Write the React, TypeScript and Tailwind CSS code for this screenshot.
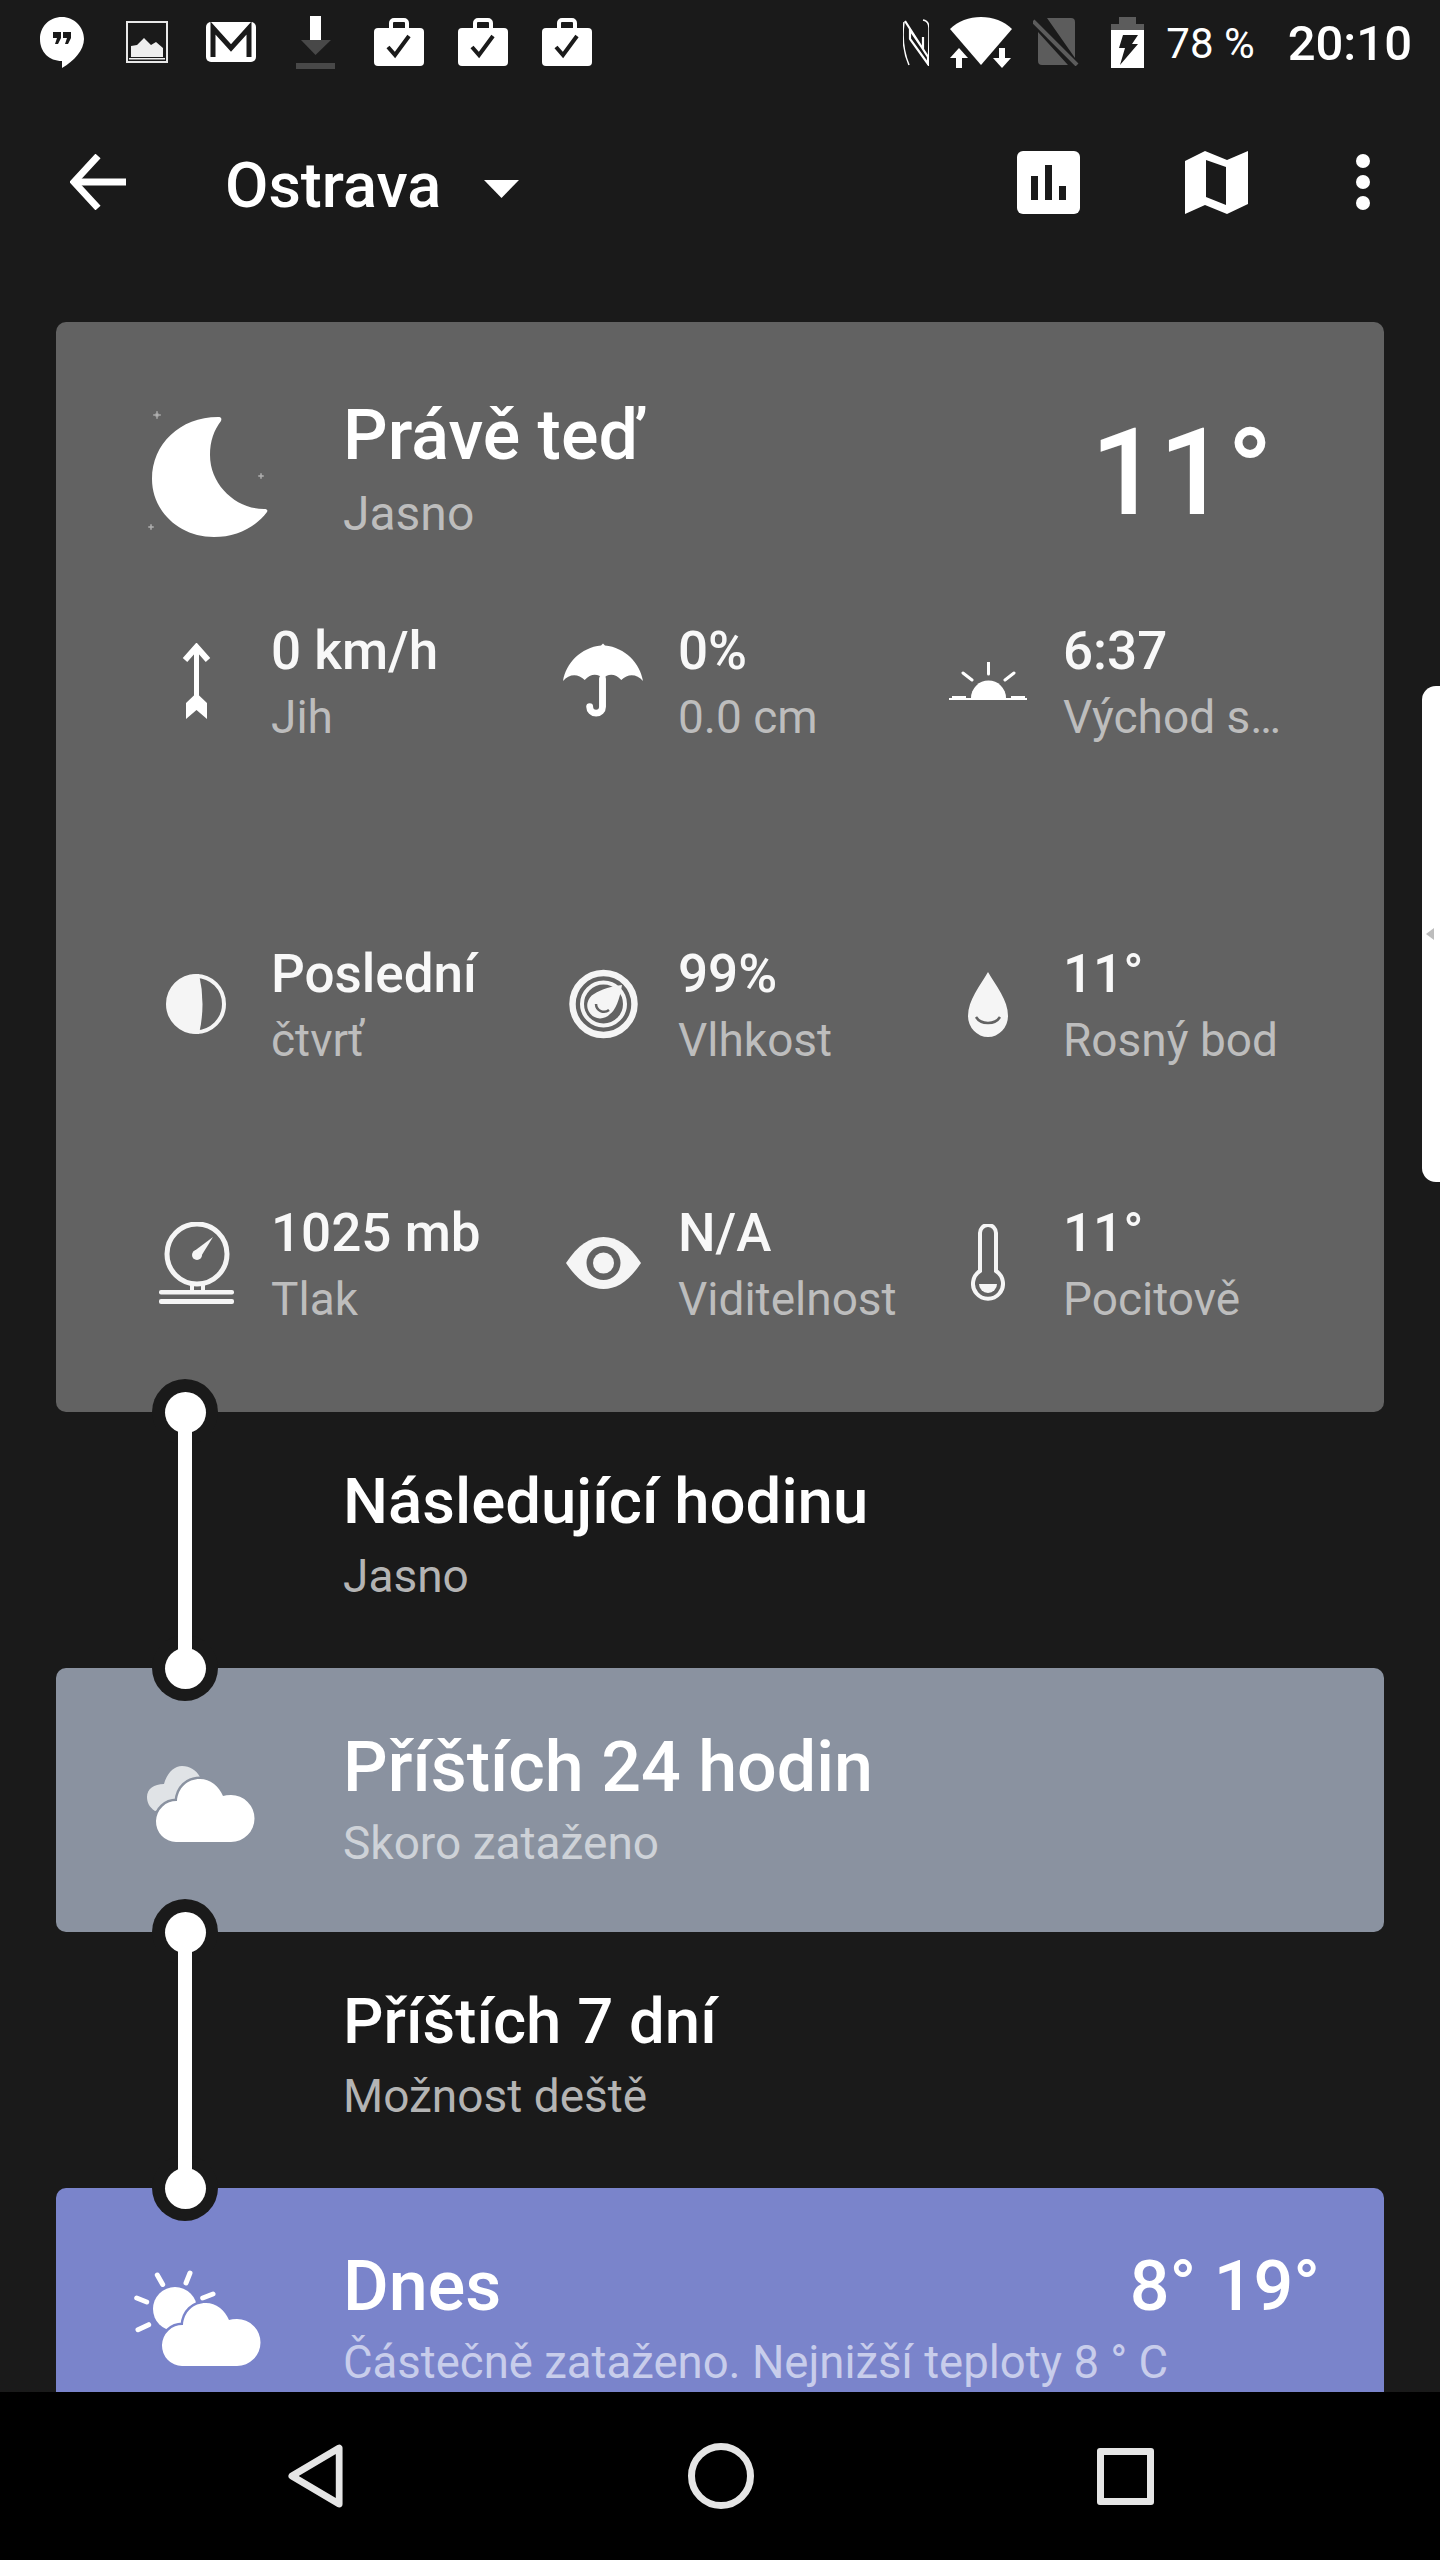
import React from "react";

const CARD = "#626262";
const BG = "#1a1a1a";

function Hangouts() {
  return (
    <svg width="44" height="51" viewBox="0 0 44 51">
      <path d="M22 0C9 0 0 10 0 22c0 13 9 22 22 22v7c12-7 22-18 22-29C44 10 34 0 22 0z" fill="#fff" />
      <path d="M13 15h8v6l-3 6h-3l2-6h-4zM23 15h8v6l-3 6h-3l2-6h-4z" fill={BG} />
    </svg>
  );
}

function Picture() {
  return (
    <svg width="42" height="42" viewBox="0 0 42 42">
      <rect x="1" y="1" width="40" height="40" fill="none" stroke="#e8e8e8" strokeWidth="2" />
      <path d="M5 36V25l6-1 7-7 7 7 5-3 7 6v9z" fill="#eee" />
      <rect x="3" y="37" width="36" height="1.5" fill="#eee" />
    </svg>
  );
}

function Gmail() {
  return (
    <svg width="50" height="40" viewBox="0 0 50 40">
      <rect width="50" height="40" rx="5" fill="#fff" />
      <path d="M7 35V6l18 20L43 6v29" fill="none" stroke={BG} strokeWidth="5" />
    </svg>
  );
}

function Download() {
  return (
    <svg width="39" height="53" viewBox="0 0 39 53">
      <rect x="14" width="11" height="24" fill="#fff" />
      <path d="M5 24h30L19.500 39z" fill="#484848" />
      <rect y="47" width="39" height="6" fill="#484848" />
    </svg>
  );
}

function Bag() {
  return (
    <svg width="50" height="48" viewBox="0 0 50 48">
      <path d="M17 10V5a3 3 0 0 1 3-3h10a3 3 0 0 1 3 3v5" fill="none" stroke="#fff" strokeWidth="4" />
      <rect y="10" width="50" height="38" rx="4" fill="#fff" />
      <path d="M14 29l7 8 14-19" fill="none" stroke={BG} strokeWidth="4" />
    </svg>
  );
}

function Nfc() {
  return (
    <svg width="26" height="47" viewBox="0 0 26 47" fill="none" stroke="#fff">
      <path d="M1 3C-1 18 0 32 6 46" strokeWidth="1.500" />
      <path d="M20 1c5 1 6 4 6 8 0 12 0 24-1 37" strokeWidth="1.500" />
      <path d="M2 2L25 38v7L7 20v-9l13 19V18" strokeWidth="2.200" />
    </svg>
  );
}

function WifiData() {
  return (
    <svg width="62" height="51" viewBox="0 0 62 51">
      <path d="M0 12C8 4 19 0 31 0s23 4 31 12L31 48z" fill="#fff" />
      <rect x="6" y="40" width="6" height="11" fill="#fff" />
      <path d="M0 41L9 31l9 10z" fill="#fff" />
      <rect x="49" y="31" width="6" height="11" fill="#fff" />
      <path d="M43 41h18l-9 10z" fill="#fff" />
    </svg>
  );
}

function NoSim() {
  return (
    <svg width="46" height="48" viewBox="0 0 46 48">
      <path d="M14 0h24a4 4 0 0 1 4 4v36zM5 14l30 33H9a4 4 0 0 1-4-4z" fill="#5c5c5c" />
      <path d="M0 3l44 44" stroke="#5c5c5c" strokeWidth="4" />
    </svg>
  );
}

function Battery() {
  return (
    <svg width="33" height="51" viewBox="0 0 33 51">
      <path d="M8 0h17v7h8v44H0V7h8z" fill="#5c5c5c" />
      <rect y="13" width="33" height="38" fill="#fff" />
      <path d="M12 18h15l-6 9h6L9 48l5-17H8z" fill={BG} />
    </svg>
  );
}

function BackArrow() {
  return (
    <svg width="56" height="56" viewBox="0 0 56 56" fill="none" stroke="#fff" strokeWidth="7">
      <path d="M28 2L4 28l24 26" />
      <path d="M4 28h52" />
    </svg>
  );
}

function ChartIcon() {
  return (
    <svg width="63" height="63" viewBox="0 0 63 63">
      <rect width="63" height="63" rx="6" fill="#fff" />
      <rect x="14" y="25" width="7" height="24" fill={BG} />
      <rect x="28" y="14" width="7" height="35" fill={BG} />
      <rect x="42" y="35" width="7" height="14" fill={BG} />
    </svg>
  );
}

function MapIcon() {
  return (
    <svg width="63" height="63" viewBox="0 0 63 63">
      <path
        fillRule="evenodd"
        d="M0 10L20 0l22 9L63 0v53L42 63 20 54 0 63zM21 9v37l20 8V16z"
        fill="#fff"
      />
    </svg>
  );
}

function Sparkle({ x, y, r }: { x: number; y: number; r: number }) {
  return (
    <path
      d={`M${x} ${y - r}Q${x} ${y} ${x + r} ${y}Q${x} ${y} ${x} ${y + r}Q${x} ${y} ${x - r} ${y}Q${x} ${y} ${x} ${y - r}Z`}
      fill="#b0b0b0"
      stroke="#b0b0b0"
      strokeWidth="0.6"
    />
  );
}

function MoonIcon() {
  return (
    <svg width="116" height="120" viewBox="0 0 116 120" className="overflow-visible">
      <path
        d="M66 0C28 0 0 27 0 62c0 32 27 58 62 58 22 0 42-10 53-25 1-2 0-3-3-3-28 0-54-24-54-54 0-14 4-25 11-34 1-3 0-4-3-4z"
        fill="#fff"
      />
      <Sparkle x={5} y={-2} r={4} />
      <Sparkle x={109} y={59} r={3} />
      <Sparkle x={-1} y={110} r={3} />
    </svg>
  );
}

function WindIcon() {
  return (
    <svg width="29" height="76" viewBox="0 0 29 76">
      <path d="M3 17L14.500 4 26 17" fill="none" stroke="#fff" strokeWidth="6" />
      <rect x="12" y="4" width="5" height="50" fill="#fff" />
      <path d="M14.500 50L25 60v16l-10.500-9L4 76V60z" fill="#fff" />
    </svg>
  );
}

function UmbrellaIcon() {
  return (
    <svg width="81" height="76" viewBox="0 0 81 76">
      <path
        d="M40.500 0l2 2C63 4 78 20 81 38c-6-7-15-8-22-1-6-7-14-7-18.500-1-4.500-6-12.500-6-18.500 1-7-7-16-6-22 1C3 20 18 4 38.500 2z"
        fill="#fff"
      />
      <path d="M40 36v28a6.500 6.500 0 0 1-13 0" fill="none" stroke="#fff" strokeWidth="7" strokeLinecap="round" />
    </svg>
  );
}

function SunriseIcon() {
  return (
    <svg width="78" height="38" viewBox="0 0 78 38">
      <path d="M22 36a17.500 17.500 0 0 1 35 0z" fill="#fff" />
      <rect y="36" width="78" height="2" fill="#fff" />
      <rect x="3" y="34" width="14" height="2" fill="#fff" />
      <rect x="62" y="34" width="14" height="2" fill="#fff" />
      <path d="M39.500 0v12M14 11l9 7M65 11l-9 7" stroke="#fff" strokeWidth="3" strokeLinecap="round" />
    </svg>
  );
}

function PhaseIcon() {
  return (
    <svg width="60" height="60" viewBox="0 0 60 60">
      <circle cx="30" cy="30" r="28" fill="none" stroke="#f5f5f5" strokeWidth="4" />
      <path d="M33 0A30 30 0 1 0 33 60Q40 30 33 0z" fill="#f5f5f5" />
    </svg>
  );
}

function HumidityIcon() {
  return (
    <svg width="71" height="70" viewBox="0 0 71 70" fill="none" stroke="#f5f5f5">
      <circle cx="35.500" cy="35" r="31" strokeWidth="6.500" />
      <circle cx="35.500" cy="35" r="21.500" strokeWidth="4" />
      <path d="M54 16C52 30 47 42 42 45A13 13 0 1 1 26 25C33 20 45 17 54 16z" fill="#f5f5f5" stroke="none" />
      <path d="M28 35a8 8 0 0 0 13 6" strokeWidth="2.500" stroke={CARD} />
    </svg>
  );
}

function DropIcon() {
  return (
    <svg width="40" height="65" viewBox="0 0 40 65">
      <path d="M20 0c8 14 20 28 20 44A20 21 0 0 1 0 44C0 28 12 14 20 0z" fill="#f5f5f5" />
      <path d="M8 45c5 8 19 8 24 0" fill="none" stroke={CARD} strokeWidth="2.500" />
    </svg>
  );
}

function BarometerIcon() {
  return (
    <svg width="75" height="82" viewBox="0 0 75 82">
      <circle cx="38" cy="32" r="30" fill="none" stroke="#f5f5f5" strokeWidth="5" />
      <circle cx="38" cy="33" r="5" fill="#f5f5f5" />
      <path d="M34 30l20-15-13 21z" fill="#f5f5f5" />
      <path d="M33 62v7M44 62v7" stroke="#f5f5f5" strokeWidth="4" />
      <rect y="68" width="75" height="4.500" rx="2" fill="#f5f5f5" />
      <rect y="77" width="75" height="5" rx="2" fill="#f5f5f5" />
    </svg>
  );
}

function EyeIcon() {
  return (
    <svg width="75" height="52" viewBox="0 0 75 52">
      <path d="M0 26C12 8 24 0 37.500 0S63 8 75 26C63 44 51 52 37.500 52S12 44 0 26z" fill="#f5f5f5" />
      <circle cx="37.500" cy="26" r="17" fill={CARD} />
      <circle cx="37.500" cy="26" r="10.500" fill="#f5f5f5" />
    </svg>
  );
}

function ThermoIcon() {
  return (
    <svg width="34" height="78" viewBox="0 0 34 78">
      <path
        d="M9 47V9a8 8 0 0 1 16 0v38a15 15 0 1 1-16 0z"
        fill="none"
        stroke="#f5f5f5"
        strokeWidth="4"
      />
      <path d="M8 60h18a9 9 0 0 1-18 0z" fill="#f5f5f5" />
    </svg>
  );
}

const cloudPath =
  "M22 63h55a23.500 23.500 0 0 0 0-47q-5 0-8 1C65 7 56 0 46 0 33 0 24 9 23 22a20.500 20.500 0 0 0-1 41z";

function CloudIcon() {
  return (
    <svg width="100" height="63" viewBox="0 0 100 63" className="overflow-visible">
      <path d="M1 32c-6-4-8-9-8-14C-7 10 0 5 10 5 13-6 20-13 28-13c8 0 14 4 18 11L10 30z" fill="#e0e3e6" />
      <path d={cloudPath} fill="#fff" stroke="#8a92a0" strokeWidth="5" paintOrder="stroke" />
    </svg>
  );
}

function SunCloudIcon() {
  return (
    <svg width="100" height="63" viewBox="0 0 100 63" className="overflow-visible">
      <circle cx="15" cy="6" r="22" fill="#fff" />
      <path
        d="M-2.700-28L2.700-18.500M30-30L26-20M-23.300-5L-13.300-1M-22 26.700L-11.300 21.700M53-9L42.700-5"
        stroke="#fff"
        strokeWidth="5"
        strokeLinecap="round"
      />
      <path d={cloudPath} fill="#fff" stroke="#7a84cb" strokeWidth="5" paintOrder="stroke" />
    </svg>
  );
}

function Detail({ icon, value, label }: { icon: React.ReactNode; value: string; label: string }) {
  return (
    <div className="flex items-center">
      <div className="w-[80px] mr-[35px] -mt-[6px] shrink-0 flex justify-center">{icon}</div>
      <div className="whitespace-nowrap">
        <div className="text-[53px] leading-[64px] font-medium text-[#f8f8f8]">{value}</div>
        <div className="text-[46px] leading-[64px] mt-[2px] text-[#bdbdbd]">{label}</div>
      </div>
    </div>
  );
}

function Connector() {
  return (
    <div className="absolute left-[96px] top-[-33px] bottom-[-33px] w-[66px] z-10 flex flex-col items-center justify-between">
      <div className="w-[66px] h-[66px] rounded-full bg-[#1a1a1a] flex items-center justify-center">
        <div className="w-[41px] h-[41px] rounded-full bg-white" />
      </div>
      <div className="relative w-[14px] flex-1 bg-white -my-[20px]" />
      <div className="w-[66px] h-[66px] rounded-full bg-[#1a1a1a] flex items-center justify-center">
        <div className="w-[41px] h-[41px] rounded-full bg-white" />
      </div>
    </div>
  );
}

function PlainRow({ title, label }: { title: string; label: string }) {
  return (
    <div className="relative h-[256px] pl-[287px] flex items-center">
      <Connector />
      <div className="mb-[10px]">
        <div className="text-[63.500px] leading-[76px] font-medium text-white">{title}</div>
        <div className="text-[46px] leading-[60px] mt-[6px] text-[#b4b4b4]">{label}</div>
      </div>
    </div>
  );
}

export default function App() {
  return (
    <div className="relative w-[1440px] h-[2560px] flex flex-col overflow-hidden bg-[#1a1a1a] font-['Roboto',sans-serif] text-white">
      {/* status bar */}
      <div className="h-[84px] shrink-0 flex items-center pl-[40px] pr-[28px]">
        <Hangouts />
        <div className="ml-[42px]"><Picture /></div>
        <div className="ml-[38px]"><Gmail /></div>
        <div className="ml-[40px]"><Download /></div>
        <div className="ml-[39px]"><Bag /></div>
        <div className="ml-[34px]"><Bag /></div>
        <div className="ml-[34px]"><Bag /></div>
        <div className="ml-auto"><Nfc /></div>
        <div className="ml-[21px]"><WifiData /></div>
        <div className="ml-[21px]"><NoSim /></div>
        <div className="ml-[32px]"><Battery /></div>
        <span className="ml-[22px] mt-[3px] text-[42px] leading-none">78 %</span>
        <span className="ml-[33px] mt-[2px] text-[49px] leading-none font-medium">20:10</span>
      </div>

      {/* toolbar */}
      <div className="h-[196px] shrink-0 flex items-center pl-[70px] pr-[70px]">
        <BackArrow />
        <span className="ml-[99px] mt-[6px] text-[63px] leading-none font-medium">Ostrava</span>
        <svg width="35" height="18" viewBox="0 0 35 18" className="ml-[43px] mt-[14px]">
          <path d="M0 0h35L17.500 18z" fill="#fff" />
        </svg>
        <div className="ml-auto"><ChartIcon /></div>
        <div className="ml-[105px]"><MapIcon /></div>
        <div className="ml-[108px] flex flex-col gap-[7px]">
          <div className="w-[14px] h-[14px] rounded-full bg-white" />
          <div className="w-[14px] h-[14px] rounded-full bg-white" />
          <div className="w-[14px] h-[14px] rounded-full bg-white" />
        </div>
      </div>

      {/* content */}
      <div className="flex-1 min-h-0 overflow-hidden px-[56px] pt-[42px]">
        <div className="rounded-[10px] bg-[#626262] pt-[73px] pb-[80px]">
          <div className="flex">
            <div className="w-[287px] pl-[96px] pt-[22px] shrink-0"><MoonIcon /></div>
            <div className="flex-1">
              <div className="text-[70px] leading-[80px] font-medium">Právě teď</div>
              <div className="text-[48px] leading-[60px] mt-[9px] text-[#bdbdbd]">Jasno</div>
            </div>
            <div className="pr-[111px] pt-[8px] text-[120px] leading-[140px] font-medium">11°</div>
          </div>
          <div className="mt-[75px] pl-[100px] grid grid-cols-[407px_385px_1fr] grid-rows-[323px_259px_131px] items-start">
            <Detail icon={<WindIcon />} value="0 km/h" label="Jih" />
            <Detail icon={<UmbrellaIcon />} value="0%" label="0.0 cm" />
            <Detail icon={<SunriseIcon />} value="6:37" label="Východ s…" />
            <Detail icon={<PhaseIcon />} value="Poslední" label="čtvrť" />
            <Detail icon={<HumidityIcon />} value="99%" label="Vlhkost" />
            <Detail icon={<DropIcon />} value="11°" label="Rosný bod" />
            <Detail icon={<BarometerIcon />} value="1025 mb" label="Tlak" />
            <Detail icon={<EyeIcon />} value="N/A" label="Viditelnost" />
            <Detail icon={<ThermoIcon />} value="11°" label="Pocitově" />
          </div>
        </div>

        <PlainRow title="Následující hodinu" label="Jasno" />

        <div className="rounded-[10px] bg-[#8a92a0] h-[264px] flex items-center">
          <div className="w-[287px] pl-[98px] pt-[20px] shrink-0"><CloudIcon /></div>
          <div className="-mt-[2px]">
            <div className="text-[70px] leading-[84px] font-medium">Příštích 24 hodin</div>
            <div className="text-[46px] leading-[60px] mt-[4px] text-[#ced2d8]">Skoro zataženo</div>
          </div>
        </div>

        <PlainRow title="Příštích 7 dní" label="Možnost deště" />

        <div className="rounded-[10px] bg-[#7a84cb] h-[264px] flex items-start pr-[64px]">
          <div className="w-[287px] pl-[104px] pt-[115px] shrink-0"><SunCloudIcon /></div>
          <div className="flex-1 pt-[56px]">
            <div className="flex justify-between">
              <span className="text-[70px] leading-[84px] font-medium">Dnes</span>
              <span className="text-[70px] leading-[84px] font-medium">8° 19°</span>
            </div>
            <div className="text-[45.500px] leading-[60px] mt-[5px] text-[#c8cdeb] whitespace-nowrap">
              Částečně zataženo. Nejnižší teploty 8 ° C
            </div>
          </div>
        </div>
      </div>

      {/* navigation bar */}
      <div className="h-[168px] shrink-0 bg-black flex items-center justify-between px-[286px]">
        <svg width="58" height="66" viewBox="0 0 58 66" className="pl-[2px]">
          <path d="M4 33L53 4v58z" fill="none" stroke="#e5e5e5" strokeWidth="7" strokeLinejoin="round" />
        </svg>
        <div className="w-[66px] h-[66px] rounded-full border-[7px] border-[#e5e5e5]" />
        <div className="w-[57px] h-[57px] rounded-[3px] border-[7px] border-[#e5e5e5]" />
      </div>

      {/* side panel handle */}
      <div className="absolute right-0 top-[686px] w-[18px] h-[496px] rounded-l-[14px] bg-white flex items-center pl-[4px]">
        <div className="w-0 h-0 border-y-[6px] border-y-transparent border-r-[8px] border-r-[#bdbdbd]" />
      </div>
    </div>
  );
}
